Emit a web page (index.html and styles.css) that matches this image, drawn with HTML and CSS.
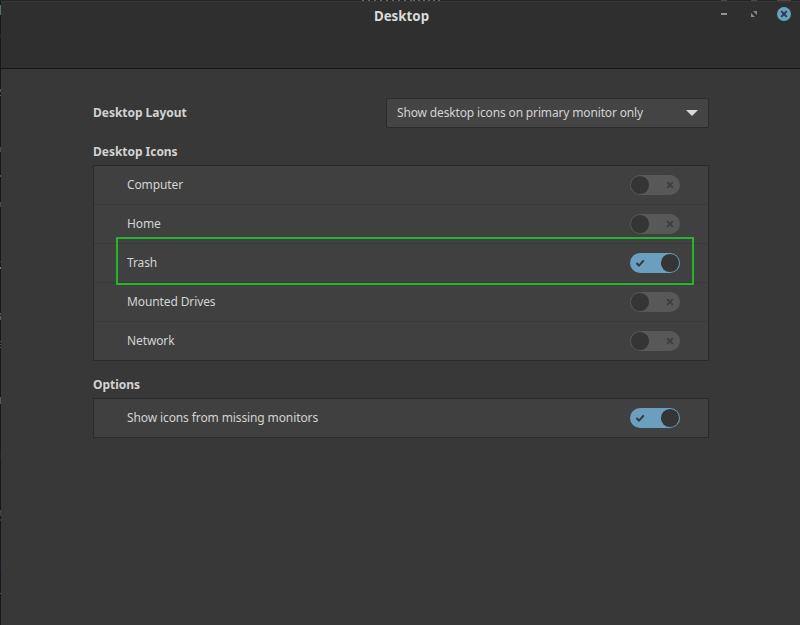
FILE: index.html
```html
<!DOCTYPE html>
<html lang="en">
<head>
<meta charset="utf-8">
<title>Desktop</title>
<link rel="stylesheet" href="styles.css">
</head>
<body>
<svg width="0" height="0" class="defs" aria-hidden="true">
  <symbol id="off" viewBox="0 0 50 20">
    <rect width="50" height="20" rx="10" fill="#585858"/>
    <circle cx="10" cy="10" r="9.1" fill="#353535"/>
    <path d="M37.2 7.2l5.6 5.6M42.8 7.2l-5.6 5.6" stroke="#3b3d44" stroke-width="1.8" fill="none"/>
  </symbol>
  <symbol id="on" viewBox="0 0 50 20">
    <rect width="50" height="20" rx="10" fill="#6b9fbf"/>
    <circle cx="40" cy="10" r="9.1" fill="#353535"/>
    <path d="M6.4 10l2.6 2.6 4.8-5.2" stroke="#333b44" stroke-width="2.1" fill="none"/>
  </symbol>
</svg>
<div class="backdrop"></div>
<div class="window">
  <header class="titlebar">
    <h1>Desktop</h1>
    <svg class="controls" width="72" height="16" viewBox="0 0 72 16">
      <path d="M1 8h6" stroke="#929292" stroke-width="2"/>
      <path d="M33 5h4v4zM31 7v4h4z" fill="#8b8b8b"/>
      <circle cx="64" cy="8" r="7" fill="#6b9fbf"/>
      <path d="M61.2 5.2l5.6 5.6M66.8 5.2l-5.6 5.6" stroke="#303940" stroke-width="1.9"/>
    </svg>
  </header>
  <main>
    <div class="layout">
      <h2>Desktop Layout</h2>
      <div class="select"><span>Show desktop icons on primary monitor only</span>
        <svg width="12" height="6" viewBox="0 0 12 6"><path d="M0 0h12L6 6z" fill="#dadada"/></svg>
      </div>
    </div>
    <h2 class="section-title">Desktop Icons</h2>
    <div class="panel">
      <div class="row"><span>Computer</span><svg class="switch"><use href="#off"/></svg></div>
      <div class="row"><span>Home</span><svg class="switch"><use href="#off"/></svg></div>
      <div class="row marked"><span>Trash</span><svg class="switch"><use href="#on"/></svg></div>
      <div class="row"><span>Mounted Drives</span><svg class="switch"><use href="#off"/></svg></div>
      <div class="row"><span>Network</span><svg class="switch"><use href="#off"/></svg></div>
    </div>
    <h2 class="section-title">Options</h2>
    <div class="panel">
      <div class="row"><span>Show icons from missing monitors</span><svg class="switch"><use href="#on"/></svg></div>
    </div>
  </main>
</div>
</body>
</html>
```
FILE: styles.css
```css
* { box-sizing: border-box; }
html, body { margin: 0; height: 100%; }
body {
  position: relative;
  overflow: hidden;
  padding: 1px 0 0 1px;
  font: 12px/18px "Noto Sans", sans-serif;
  color: #d3d3d3;
  background: #1a1a1a;
}
.defs { position: absolute; }

/* One-pixel slivers of what lies behind the window */
.backdrop {
  position: absolute;
  inset: 0;
  background:
    repeating-linear-gradient(90deg, #666 0 2px, #242424 2px 6px) 362px 0 / 51px 1px no-repeat,
    repeating-linear-gradient(90deg, #666 0 2px, #242424 2px 5px) 413px 0 / 28px 1px no-repeat,
    linear-gradient(#484848, #484848) 721px 0 / 6px 1px no-repeat,
    linear-gradient(#484848, #484848) 751px 0 / 6px 1px no-repeat,
    linear-gradient(#484848, #484848) 777px 0 / 14px 1px no-repeat,
    linear-gradient(#242424, #242424) 0 0 / 100% 1px no-repeat,
    linear-gradient(#181818 5px, #4f7566 5px 15px, #181818 15px 35px, #182852 35px 38px, #181818 38px 89px,
      #555 89px 92px, #181818 92px 95px, #666 95px 96px, #181818 96px 147px, #36554c 147px 152px, #181818 152px 175px,
      #555 175px 177px, #181818 177px 202px, #36554c 202px 207px, #181818 207px 261px, #4a2818 261px 263px,
      #181818 263px 267px, #777 267px 269px, #181818 269px 313px, #555 313px 315px, #181818 315px 316px,
      #665d4c 316px 320px, #181818 320px 341px, #555 341px 342px, #181818 342px 344px, #555 344px 345px,
      #181818 345px 347px, #555 347px 348px, #181818 348px 397px, #3b665b 397px 404px, #181818 404px 450px,
      #1d1d30 450px 460px, #181818 460px 510px, #65411b 510px 513px, #24496b 513px 516px, #181818 516px 519px,
      #204052 519px 521px, #181818 521px 562px, #1b1b38 562px 571px, #181818 571px 593px, #555 593px 594px,
      #181818 594px) 0 0 / 1px 100% no-repeat;
}
.window { position: relative; height: 100%; background: #383838; }
.titlebar {
  display: grid;
  grid-template-columns: 1fr auto 1fr;
  align-items: start;
  height: 68px;
  padding-right: 8px;
  background: #2f2f2f;
  border-top: 1px solid #383838;
  border-bottom: 1px solid #161616;
}
h1 {
  grid-column: 2;
  margin: 4px 0 0 10px;
  font-size: 13.33px;
  line-height: 20px;
  font-weight: 700;
  color: #dadada;
}
.controls { justify-self: end; margin-top: 4px; }
main { width: 616px; margin-left: 92px; padding-top: 29px; }
.layout { display: flex; align-items: center; justify-content: space-between; }
h2 { margin: 0; font-size: 12px; line-height: 18px; font-weight: 700; letter-spacing: -0.03px; }
.select {
  display: flex;
  align-items: center;
  justify-content: space-between;
  width: 323px;
  height: 30px;
  padding: 0 10px;
  border: 1px solid #2b2b2b;
  border-radius: 2px;
  background: #444;
  letter-spacing: -0.15px;
}
.section-title { margin: 15px 0 4px; }
.panel { border: 1px solid #2a2a2a; background: #404040; }
.row {
  position: relative;
  display: flex;
  align-items: center;
  justify-content: space-between;
  height: 38px;
  padding: 0 28px 0 33px;
  letter-spacing: -0.11px;
}
.row + .row { height: 39px; border-top: 1px solid #393939; }
.switch { width: 50px; height: 20px; }
.marked::after {
  content: "";
  position: absolute;
  inset: -7px 14px -3px 22px;
  border: 2px solid #24b52c;
  z-index: 1;
}
```
